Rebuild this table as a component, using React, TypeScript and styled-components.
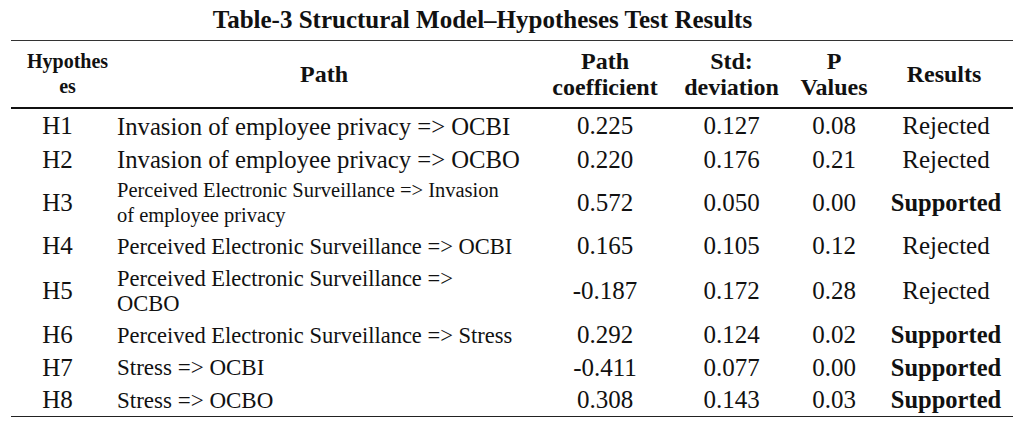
import React from "react";
import styled, { createGlobalStyle } from "styled-components";

const Global = createGlobalStyle`
  html, body { margin: 0; padding: 0; background: #ffffff; }
  body { font-family: "Liberation Serif", "Times New Roman", serif; color: #111; }
`;

const COLS = "97px 432px 130px 123px 82px 138px";

const Page = styled.div`
  width: 1029px;
  height: 431px;
  padding-top: 5px;
  box-sizing: border-box;
`;

const Title = styled.h1`
  margin: 0;
  padding-right: 64px;
  font-size: 25px;
  line-height: 29px;
  font-weight: 700;
  text-align: center;
  height: 35px;
`;

const Table = styled.div`
  margin-left: 11px;
  width: 1002px;
  border-top: 1.5px solid #333;
  border-bottom: 1.5px solid #222;
`;

const HeaderRow = styled.div`
  display: grid;
  grid-template-columns: ${COLS};
  height: 66px;
  border-bottom: 2.5px solid #111;
  align-items: center;
`;

const HeadCell = styled.div<{ $small?: boolean; $indent?: number }>`
  font-weight: 700;
  font-size: ${(p) => (p.$small ? "20px" : "24px")};
  line-height: ${(p) => (p.$small ? "25px" : "26px")};
  text-align: center;
  padding-left: ${(p) => p.$indent ?? 0}px;
  white-space: pre-line;
`;

const Row = styled.div<{ $h: number }>`
  display: grid;
  grid-template-columns: ${COLS};
  height: ${(p) => p.$h}px;
  align-items: center;
`;

const Cell = styled.div<{ $bold?: boolean }>`
  font-size: 25px;
  line-height: 30px;
  text-align: center;
  font-weight: ${(p) => (p.$bold ? 700 : 400)};
`;

const HypCell = styled(Cell)`
  padding-right: 4px;
`;

const PathCell = styled.div<{ $size: number }>`
  font-size: ${(p) => p.$size}px;
  line-height: 25px;
  padding-left: 9px;
  padding-right: 6px;
  white-space: pre-line;
`;

const ResultCell = styled(Cell)`
  font-size: ${(p) => (p.$bold ? "24.5px" : "25px")};
  padding-left: 4px;
`;

type R = {
  h: string;
  path: string;
  size: number;
  height: number;
  coef: string;
  std: string;
  p: string;
  res: string;
};

const rows: R[] = [
  { h: "H1", path: "Invasion of employee privacy => OCBI", size: 24.7, height: 34, coef: "0.225", std: "0.127", p: "0.08", res: "Rejected" },
  { h: "H2", path: "Invasion of employee privacy => OCBO", size: 24.7, height: 33, coef: "0.220", std: "0.176", p: "0.21", res: "Rejected" },
  { h: "H3", path: "Perceived Electronic Surveillance => Invasion\nof employee privacy", size: 20.5, height: 54, coef: "0.572", std: "0.050", p: "0.00", res: "Supported" },
  { h: "H4", path: "Perceived Electronic Surveillance => OCBI", size: 22.5, height: 32, coef: "0.165", std: "0.105", p: "0.12", res: "Rejected" },
  { h: "H5", path: "Perceived Electronic Surveillance =>\nOCBO", size: 22.5, height: 57, coef: "-0.187", std: "0.172", p: "0.28", res: "Rejected" },
  { h: "H6", path: "Perceived Electronic Surveillance => Stress", size: 22.5, height: 32, coef: "0.292", std: "0.124", p: "0.02", res: "Supported" },
  { h: "H7", path: "Stress => OCBI", size: 23, height: 33, coef: "-0.411", std: "0.077", p: "0.00", res: "Supported" },
  { h: "H8", path: "Stress => OCBO", size: 23, height: 32, coef: "0.308", std: "0.143", p: "0.03", res: "Supported" },
];

export default function App() {
  return (
    <Page>
      <Global />
      <Title>Table-3 Structural Model–Hypotheses Test Results</Title>
      <Table>
        <HeaderRow>
          <HeadCell $small $indent={16}>{"Hypothes\nes"}</HeadCell>
          <HeadCell>Path</HeadCell>
          <HeadCell>{"Path\ncoefficient"}</HeadCell>
          <HeadCell>{"Std:\ndeviation"}</HeadCell>
          <HeadCell>{"P\nValues"}</HeadCell>
          <HeadCell>Results</HeadCell>
        </HeaderRow>
        {rows.map((r) => (
          <Row key={r.h} $h={r.height}>
            <HypCell>{r.h}</HypCell>
            <PathCell $size={r.size}>{r.path}</PathCell>
            <Cell>{r.coef}</Cell>
            <Cell>{r.std}</Cell>
            <Cell>{r.p}</Cell>
            <ResultCell $bold={r.res === "Supported"}>{r.res}</ResultCell>
          </Row>
        ))}
      </Table>
    </Page>
  );
}
